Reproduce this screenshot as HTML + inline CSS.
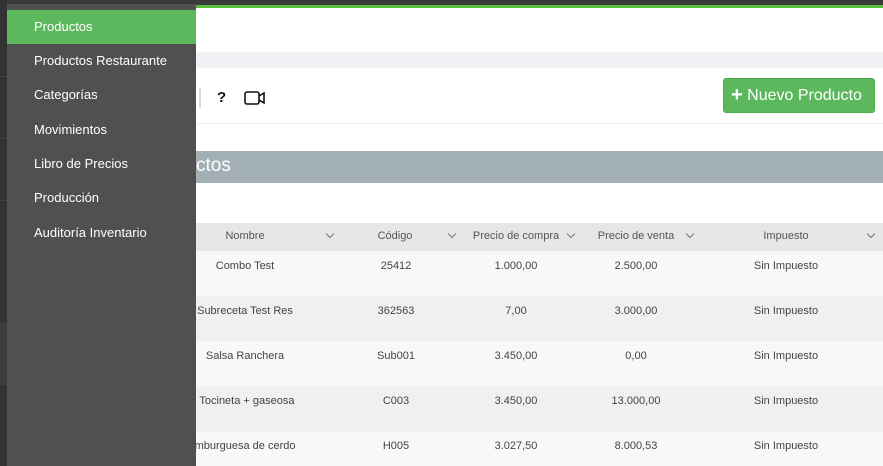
<!DOCTYPE html>
<html><head><meta charset="utf-8"><style>
*{margin:0;padding:0;box-sizing:border-box}
body{width:883px;height:466px;overflow:hidden;position:relative;background:#fff;font-family:"Liberation Sans",sans-serif}
.a{position:absolute}
.menu div{position:absolute;left:27px;color:#fff;font-size:13px;white-space:nowrap}
.th{position:absolute;top:230px;font-size:11px;color:#555;transform:translateX(-50%);white-space:nowrap}
.ch{position:absolute;top:231px;width:6px;height:6px;border-right:1px solid #777;border-bottom:1px solid #777;transform:rotate(45deg)}
.td{position:absolute;font-size:11px;color:#444;transform:translateX(-50%);white-space:nowrap}
</style></head><body>
<div class="a" style="left:0;top:0;width:883px;height:5px;background:#3a3a3a"></div>
<div class="a" style="left:196px;top:5px;width:687px;height:3px;background:#5cbf3a"></div>
<div class="a" style="left:0;top:0;width:7px;height:466px;background:#333"></div>
<div class="a" style="left:0;top:76px;width:7px;height:1px;background:#444"></div>
<div class="a" style="left:0;top:138px;width:7px;height:1px;background:#444"></div>
<div class="a" style="left:0;top:200px;width:7px;height:1px;background:#444"></div>
<div class="a" style="left:0;top:323px;width:7px;height:62px;background:#3c403c"></div>
<div class="a" style="left:196px;top:52px;width:687px;height:16px;background:#f0f1f5"></div>
<div class="a" style="left:196px;top:123px;width:687px;height:1px;background:#eee"></div>
<div class="a" style="left:199px;top:88px;width:2px;height:20px;background:#e0d8d8"></div>
<div class="a" style="left:217px;top:89px;font-size:15px;font-weight:bold;color:#111">?</div>
<svg class="a" style="left:244px;top:90px" width="22" height="16" viewBox="0 0 22 16"><rect x="1" y="2" width="14" height="12" rx="2" fill="none" stroke="#111" stroke-width="1.6"/><path d="M15 6 L20 3 V13 L15 10" fill="none" stroke="#111" stroke-width="1.6"/></svg>
<div class="a" style="left:723px;top:78px;width:152px;height:35px;background:#5cb85c;border:1px solid #4cae4c;border-radius:3px;color:#fff;font-size:16px;line-height:33px;padding-left:7px;white-space:nowrap"><b style="font-size:20px;vertical-align:-1px">+</b> Nuevo Producto</div>
<div class="a" style="left:196px;top:151px;width:687px;height:32px;background:#a2afb5"></div>
<div class="a" style="left:196px;top:155px;color:#fff;font-size:19px">ctos</div>
<div class="a" style="left:196px;top:223px;width:687px;height:28px;background:#e6e6e6"></div>
<div class="th" style="left:245px">Nombre</div><div class="ch" style="left:327px"></div>
<div class="th" style="left:395px">Código</div><div class="ch" style="left:449px"></div>
<div class="th" style="left:516px">Precio de compra</div><div class="ch" style="left:568px"></div>
<div class="th" style="left:636px">Precio de venta</div><div class="ch" style="left:687px"></div>
<div class="th" style="left:786px">Impuesto</div><div class="ch" style="left:868px"></div>
<div class="a" style="left:196px;top:251px;width:687px;height:45px;background:#f8f8f8"></div>
<div class="a" style="left:196px;top:296px;width:687px;height:45px;background:#f0f0f0"></div>
<div class="a" style="left:196px;top:341px;width:687px;height:45px;background:#f8f8f8"></div>
<div class="a" style="left:196px;top:386px;width:687px;height:46px;background:#f0f0f0"></div>
<div class="a" style="left:196px;top:432px;width:687px;height:34px;background:#f8f8f8"></div>
<div class="td" style="left:245px;top:260px">Combo Test</div><div class="td" style="left:396px;top:260px">25412</div><div class="td" style="left:516px;top:260px">1.000,00</div><div class="td" style="left:636px;top:260px">2.500,00</div><div class="td" style="left:786px;top:260px">Sin Impuesto</div>
<div class="td" style="left:245px;top:305px">Subreceta Test Res</div><div class="td" style="left:396px;top:305px">362563</div><div class="td" style="left:516px;top:305px">7,00</div><div class="td" style="left:636px;top:305px">3.000,00</div><div class="td" style="left:786px;top:305px">Sin Impuesto</div>
<div class="td" style="left:245px;top:350px">Salsa Ranchera</div><div class="td" style="left:396px;top:350px">Sub001</div><div class="td" style="left:516px;top:350px">3.450,00</div><div class="td" style="left:636px;top:350px">0,00</div><div class="td" style="left:786px;top:350px">Sin Impuesto</div>
<div class="td" style="left:240px;top:395px">C. Tocineta + gaseosa</div><div class="td" style="left:396px;top:395px">C003</div><div class="td" style="left:516px;top:395px">3.450,00</div><div class="td" style="left:636px;top:395px">13.000,00</div><div class="td" style="left:786px;top:395px">Sin Impuesto</div>
<div class="td" style="left:238px;top:440px">Hamburguesa de cerdo</div><div class="td" style="left:396px;top:440px">H005</div><div class="td" style="left:516px;top:440px">3.027,50</div><div class="td" style="left:636px;top:440px">8.000,53</div><div class="td" style="left:786px;top:440px">Sin Impuesto</div>
<div class="a menu" style="left:7px;top:4px;width:189px;height:462px;background:#505050">
<div style="left:0;top:6px;width:189px;height:34px;background:#5cb85c"></div>
<div style="top:15px">Productos</div>
<div style="top:49px">Productos Restaurante</div>
<div style="top:83px">Categorías</div>
<div style="top:118px">Movimientos</div>
<div style="top:152px">Libro de Precios</div>
<div style="top:186px">Producción</div>
<div style="top:221px">Auditoría Inventario</div>
</div>
</body></html>
